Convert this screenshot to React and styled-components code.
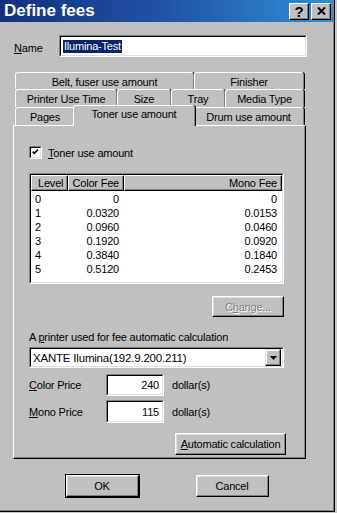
import React from "react";
import styled, { createGlobalStyle } from "styled-components";

const GlobalStyle = createGlobalStyle`
  body {
    margin: 0;
    background: #c8c8c8;
    font-family: "Liberation Sans", Arial, sans-serif;
    font-size: 11px;
    letter-spacing: -0.2px;
    color: #000;
  }
`;

const rows = [
  ["0", "0", "0"],
  ["1", "0.0320", "0.0153"],
  ["2", "0.0960", "0.0460"],
  ["3", "0.1920", "0.0920"],
  ["4", "0.3840", "0.1840"],
  ["5", "0.5120", "0.2453"],
];

const tabRows = [
  [
    { label: "Belt, fuser use amount", w: 179 },
    { label: "Finisher", w: 110 },
  ],
  [
    { label: "Printer Use Time", w: 102 },
    { label: "Size", w: 54 },
    { label: "Tray", w: 54 },
    { label: "Media Type", w: 79 },
  ],
  [
    { label: "Pages", w: 60 },
    { label: "Toner use amount", w: 118, active: true },
    { label: "Drum use amount", w: 111 },
  ],
];

const Window = styled.div`
  width: 334px;
  height: 511px;
  background: #c0c0c0;
  border-right: 1px solid #000;
  border-bottom: 1px solid #000;
  box-shadow: inset -1px -1px 0 #808080;
  display: flex;
  flex-direction: column;
`;

const TitleBar = styled.div`
  height: 22px;
  margin-right: 1px;
  padding: 0 2px 0 4px;
  display: flex;
  align-items: center;
  justify-content: space-between;
  background: linear-gradient(to right, #12307e, #2154a8 50%, #2d8fd4);
`;

const Title = styled.div`
  color: #fff;
  font-weight: bold;
  font-size: 17px;
  letter-spacing: 0;
`;

const TitleButtons = styled.div`
  display: flex;
  gap: 2px;
`;

const CaptionButton = styled.div`
  width: 20px;
  height: 17px;
  box-sizing: border-box;
  background: #c0c0c0;
  border: 1px solid;
  border-color: #fff #000 #000 #fff;
  box-shadow: inset -1px -1px 0 #808080;
  display: flex;
  align-items: center;
  justify-content: center;
  font-weight: bold;
  font-size: 15px;
  letter-spacing: 0;
  line-height: 1;
`;

const Body = styled.div`
  padding: 13px 0 0 13px;
  display: flex;
  flex-direction: column;
`;

const NameRow = styled.div`
  display: flex;
  align-items: center;
  height: 22px;
`;

const NameLabel = styled.div`
  width: 45px;
  padding-left: 1px;
  margin-top: 3px;
`;

const Key = styled.span`
  text-decoration: underline;
`;

const Sunken = styled.div`
  box-sizing: border-box;
  width: ${(p) => p.$w || "auto"};
  height: ${(p) => p.$h || "auto"};
  border: 1px solid;
  border-color: #808080 #fff #fff #808080;
  display: flex;
`;

const SunkenInner = styled.div`
  flex: 1;
  box-sizing: border-box;
  border: 1px solid;
  border-color: #000 #dfdfdf #dfdfdf #000;
  background: #fff;
  display: flex;
  flex-direction: ${(p) => (p.$column ? "column" : "row")};
  align-items: ${(p) => (p.$column ? "stretch" : "center")};
  justify-content: ${(p) => (p.$right ? "flex-end" : "flex-start")};
  padding: ${(p) => p.$pad || "0"};
  overflow: hidden;
`;

const Selected = styled.span`
  background: #0a246a;
  color: #fff;
  padding: 0 1px;
  line-height: 13px;
`;

const TabStack = styled.div`
  margin-top: 15px;
  width: 293px;
  display: flex;
  flex-direction: column;
`;

const TabRow = styled.div`
  display: flex;
  padding-left: 2px;
  height: ${(p) => p.$h}px;
`;

const Tab = styled.div`
  box-sizing: border-box;
  width: ${(p) => p.$w}px;
  height: 100%;
  background: #c0c0c0;
  border-top: 1px solid #fff;
  border-left: 1px solid #fff;
  border-right: 1px solid #808080;
  box-shadow: 1px 0 0 #000;
  border-radius: 3px 3px 0 0;
  display: flex;
  align-items: center;
  justify-content: center;
  padding-top: 1px;
  white-space: nowrap;
`;

const ActiveTab = styled(Tab)`
  position: relative;
  z-index: 2;
  width: ${(p) => p.$w + 4}px;
  height: calc(100% + 3px);
  margin: -2px -2px -1px;
  align-items: flex-start;
  padding-top: 2px;
`;

const Panel = styled.div`
  box-sizing: border-box;
  width: 293px;
  height: 334px;
  border: 1px solid;
  border-color: #fff #000 #000 #fff;
  box-shadow: inset -1px -1px 0 #808080;
  padding: 20px 0 0 15px;
`;

const Content = styled.div`
  width: 255px;
  display: flex;
  flex-direction: column;
`;

const CheckRow = styled.div`
  display: flex;
  align-items: center;
  gap: 6px;
  height: 13px;
`;

const CheckBox = styled.div`
  box-sizing: border-box;
  width: 13px;
  height: 13px;
  border: 1px solid;
  border-color: #808080 #fff #fff #808080;
  display: flex;
`;

const ListBox = styled(Sunken)`
  margin-top: 14px;
`;

const ListHeader = styled.div`
  display: grid;
  grid-template-columns: 37px 56px 1fr;
  height: 16px;
  margin-bottom: 1px;
`;

const HeaderCell = styled.div`
  box-sizing: border-box;
  background: #c0c0c0;
  border: 1px solid;
  border-color: #fff #000 #000 #fff;
  box-shadow: inset -1px -1px 0 #808080;
  display: flex;
  align-items: center;
  justify-content: ${(p) => (p.$right ? "flex-end" : "flex-start")};
  padding: 0 ${(p) => (p.$right ? "4px" : "0")} 0 ${(p) => (p.$right ? "0" : "6px")};
`;

const ListRow = styled.div`
  display: grid;
  grid-template-columns: 37px 56px 1fr;
  height: 14px;
  line-height: 14px;
`;

const Cell = styled.div`
  text-align: ${(p) => (p.$right ? "right" : "left")};
  padding: 0 ${(p) => (p.$right ? "5px" : "0")} 0 ${(p) => (p.$right ? "0" : "4px")};
`;

const ButtonRow = styled.div`
  display: flex;
  justify-content: flex-end;
  margin-top: ${(p) => p.$mt}px;
  margin-right: ${(p) => p.$mr || 0}px;
`;

const Button = styled.div`
  box-sizing: border-box;
  width: ${(p) => p.$w}px;
  height: ${(p) => p.$h}px;
  background: #c0c0c0;
  border: 1px solid;
  border-color: #fff #000 #000 #fff;
  box-shadow: inset -1px -1px 0 #808080, inset 1px 1px 0 #dfdfdf;
  display: flex;
  align-items: center;
  justify-content: center;
  color: ${(p) => (p.$disabled ? "#808080" : "#000")};
  text-shadow: ${(p) => (p.$disabled ? "1px 1px 0 #fff" : "none")};
  outline: ${(p) => (p.$default ? "1px solid #000" : "none")};
`;

const FieldLabel = styled.div`
  margin-top: ${(p) => p.$mt}px;
  line-height: 13px;
`;

const Combo = styled(Sunken)`
  margin-top: 3px;
`;

const ComboText = styled.div`
  flex: 1;
  padding-left: 1px;
  font-size: 11.5px;
`;

const DropButton = styled.div`
  box-sizing: border-box;
  width: 16px;
  height: 17px;
  background: #c0c0c0;
  border: 1px solid;
  border-color: #dfdfdf #000 #000 #dfdfdf;
  box-shadow: inset -1px -1px 0 #808080, inset 1px 1px 0 #fff;
  display: flex;
  align-items: center;
  justify-content: center;
`;

const PriceRow = styled.div`
  display: flex;
  align-items: center;
  margin-top: ${(p) => p.$mt}px;
`;

const PriceLabel = styled.div`
  width: 77px;
`;

const Unit = styled.div`
  margin-left: 8px;
`;

const Footer = styled.div`
  display: flex;
  justify-content: center;
  gap: 57px;
  margin-top: 16px;
  margin-left: -13px;
`;

function CaptionClose() {
  return (
    <svg width="9" height="8" viewBox="0 0 9 8">
      <path d="M1 0.5 L8 7.5 M8 0.5 L1 7.5" stroke="#000" strokeWidth="2" />
    </svg>
  );
}

function CheckMark() {
  return (
    <svg width="11" height="11" viewBox="0 0 11 11">
      <path d="M2 4.5 L4 6.5 L8.5 2" stroke="#000" strokeWidth="2" fill="none" />
    </svg>
  );
}

function DownArrow() {
  return (
    <svg width="7" height="4" viewBox="0 0 7 4">
      <path d="M0 0 H7 L3.5 4 Z" fill="#000" />
    </svg>
  );
}

export default function App() {
  return (
    <>
      <GlobalStyle />
      <Window>
        <TitleBar>
          <Title>Define fees</Title>
          <TitleButtons>
            <CaptionButton>?</CaptionButton>
            <CaptionButton>
              <CaptionClose />
            </CaptionButton>
          </TitleButtons>
        </TitleBar>

        <Body>
          <NameRow>
            <NameLabel>
              <Key>N</Key>ame
            </NameLabel>
            <Sunken $w="248px" $h="22px">
              <SunkenInner $pad="0 0 0 2px">
                <Selected>Ilumina-Test</Selected>
              </SunkenInner>
            </Sunken>
          </NameRow>

          <TabStack>
            {tabRows.map((row, i) => (
              <TabRow key={i} $h={i === 0 ? 17 : 18}>
                {row.map((t) =>
                  t.active ? (
                    <ActiveTab key={t.label} $w={t.w}>
                      {t.label}
                    </ActiveTab>
                  ) : (
                    <Tab key={t.label} $w={t.w}>
                      {t.label}
                    </Tab>
                  )
                )}
              </TabRow>
            ))}
            <Panel>
              <Content>
                <CheckRow>
                  <CheckBox>
                    <SunkenInner>
                      <CheckMark />
                    </SunkenInner>
                  </CheckBox>
                  <div>
                    <Key>T</Key>oner use amount
                  </div>
                </CheckRow>

                <ListBox $h="111px">
                  <SunkenInner $column>
                    <ListHeader>
                      <HeaderCell>Level</HeaderCell>
                      <HeaderCell $right>Color Fee</HeaderCell>
                      <HeaderCell $right>Mono Fee</HeaderCell>
                    </ListHeader>
                    {rows.map((r) => (
                      <ListRow key={r[0]}>
                        <Cell>{r[0]}</Cell>
                        <Cell $right>{r[1]}</Cell>
                        <Cell $right>{r[2]}</Cell>
                      </ListRow>
                    ))}
                  </SunkenInner>
                </ListBox>

                <ButtonRow $mt={12}>
                  <Button $w={72} $h={21} $disabled>
                    C<Key>h</Key>ange...
                  </Button>
                </ButtonRow>

                <FieldLabel $mt={14}>
                  A <Key>p</Key>rinter used for fee automatic calculation
                </FieldLabel>
                <Combo $h="21px">
                  <SunkenInner $pad="0 1px 0 1px">
                    <ComboText>XANTE Ilumina(192.9.200.211)</ComboText>
                    <DropButton>
                      <DownArrow />
                    </DropButton>
                  </SunkenInner>
                </Combo>

                <PriceRow $mt={6}>
                  <PriceLabel>
                    <Key>C</Key>olor Price
                  </PriceLabel>
                  <Sunken $w="58px" $h="22px">
                    <SunkenInner $right $pad="0 3px 0 0">
                      240
                    </SunkenInner>
                  </Sunken>
                  <Unit>dollar(s)</Unit>
                </PriceRow>
                <PriceRow $mt={4}>
                  <PriceLabel>
                    <Key>M</Key>ono Price
                  </PriceLabel>
                  <Sunken $w="58px" $h="23px">
                    <SunkenInner $right $pad="0 3px 0 0">
                      115
                    </SunkenInner>
                  </Sunken>
                  <Unit>dollar(s)</Unit>
                </PriceRow>

                <ButtonRow $mt={10} $mr={-2}>
                  <Button $w={111} $h={22}>
                    <Key>A</Key>utomatic calculation
                  </Button>
                </ButtonRow>
              </Content>
            </Panel>
          </TabStack>

          <Footer>
            <Button $w={73} $h={22} $default>
              OK
            </Button>
            <Button $w={73} $h={22}>
              Cancel
            </Button>
          </Footer>
        </Body>
      </Window>
    </>
  );
}
